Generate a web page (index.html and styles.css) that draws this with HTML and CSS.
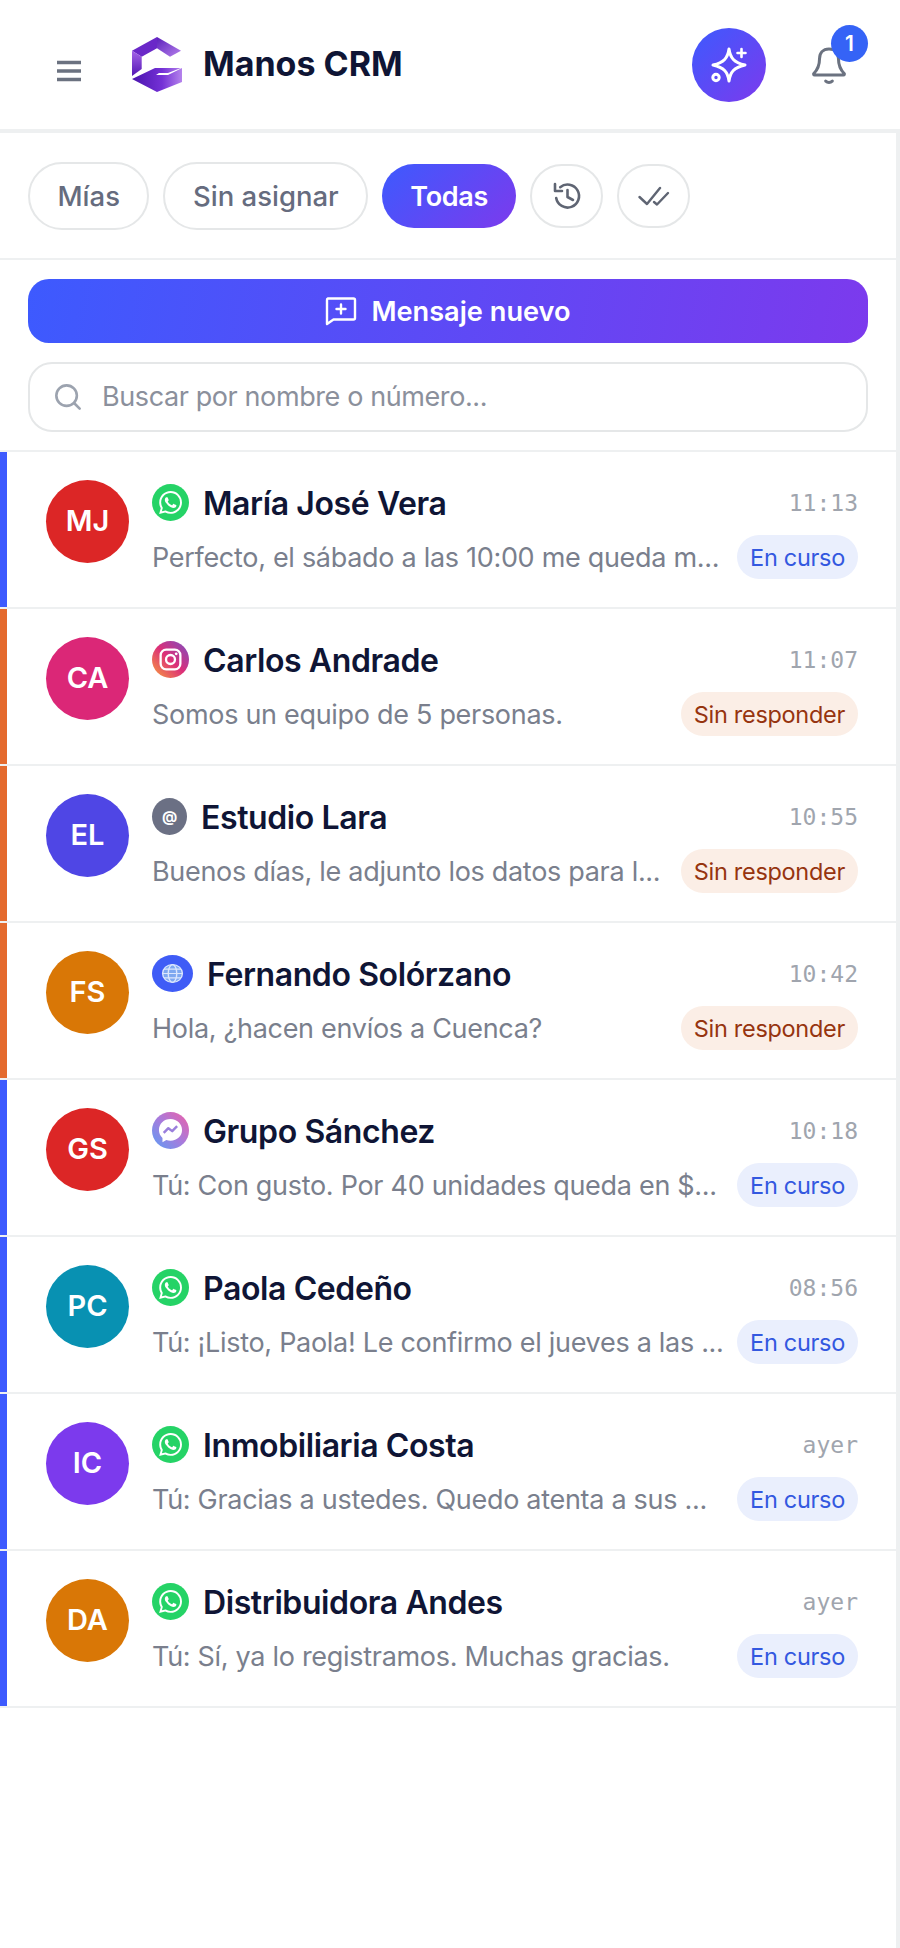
FILE: index.html
```html
<!DOCTYPE html>
<html lang="es">
<head>
    <meta charset="UTF-8">
    <meta name="viewport" content="width=device-width, initial-scale=1.0">
    <title>Manos CRM</title>
    <link rel="stylesheet" href="styles.css">
</head>
<body>
    <svg class="defs" width="0" height="0">
        <defs>
            <linearGradient id="logo-top" x1="0" y1="0" x2="1" y2="1">
                <stop offset="0" stop-color="#5a1fbb"/>
                <stop offset="1" stop-color="#b681ec"/>
            </linearGradient>
            <linearGradient id="logo-left" x1="0" y1="0" x2="0" y2="1">
                <stop offset="0" stop-color="#a564e8"/>
                <stop offset="1" stop-color="#5317b4"/>
            </linearGradient>
            <linearGradient id="logo-hand" x1="0" y1="0" x2="1" y2="0">
                <stop offset="0" stop-color="#4a14ad"/>
                <stop offset="0.6" stop-color="#7431d6"/>
                <stop offset="1" stop-color="#b583ec"/>
            </linearGradient>
            <linearGradient id="ig-grad" x1="0" y1="1" x2="1" y2="0">
                <stop offset="0" stop-color="#f9a03c"/>
                <stop offset="0.5" stop-color="#dc2f78"/>
                <stop offset="1" stop-color="#7b4fc4"/>
            </linearGradient>
            <linearGradient id="ms-grad" x1="0" y1="1" x2="1" y2="0">
                <stop offset="0" stop-color="#5b9df5"/>
                <stop offset="0.5" stop-color="#a77bdc"/>
                <stop offset="1" stop-color="#ee5fa7"/>
            </linearGradient>
            <symbol id="wa" viewBox="0 0 24 24">
                <circle cx="12" cy="12" r="12" fill="#25d366"/>
                <g transform="translate(4.6 4.6) scale(0.62)">
                    <path fill="#fff" d="M17.472 14.382c-.297-.149-1.758-.867-2.03-.967-.273-.099-.471-.148-.67.15-.197.297-.767.966-.94 1.164-.173.199-.347.223-.644.075-.297-.15-1.255-.463-2.39-1.475-.883-.788-1.48-1.761-1.653-2.059-.173-.297-.018-.458.13-.606.134-.133.298-.347.446-.52.149-.174.198-.298.298-.497.099-.198.05-.371-.025-.52-.075-.149-.669-1.612-.916-2.207-.242-.579-.487-.5-.669-.51-.173-.008-.371-.01-.57-.01-.198 0-.52.074-.792.372-.272.297-1.04 1.016-1.04 2.479 0 1.462 1.065 2.875 1.213 3.074.149.198 2.096 3.2 5.077 4.487.709.306 1.262.489 1.694.625.712.227 1.36.195 1.871.118.571-.085 1.758-.719 2.006-1.413.248-.694.248-1.289.173-1.413-.074-.124-.272-.198-.57-.347m-5.421 7.403h-.004a9.87 9.87 0 01-5.031-1.378l-.361-.214-3.741.982.998-3.648-.235-.374a9.86 9.86 0 01-1.51-5.26c.001-5.45 4.436-9.884 9.888-9.884 2.64 0 5.122 1.03 6.988 2.898a9.825 9.825 0 012.893 6.994c-.003 5.45-4.437 9.884-9.885 9.884m8.413-18.297A11.815 11.815 0 0012.05 0C5.495 0 .16 5.335.157 11.892c0 2.096.547 4.142 1.588 5.945L.057 24l6.305-1.654a11.882 11.882 0 005.683 1.448h.005c6.554 0 11.89-5.335 11.893-11.893a11.821 11.821 0 00-3.48-8.413z"/>
                </g>
            </symbol>
            <symbol id="ig" viewBox="0 0 24 24">
                <circle cx="12" cy="12" r="12" fill="url(#ig-grad)"/>
                <rect x="5.6" y="5.6" width="12.8" height="12.8" rx="3.6" fill="none" stroke="#fff" stroke-width="1.5"/>
                <circle cx="12" cy="12" r="2.9" fill="none" stroke="#fff" stroke-width="1.5"/>
                <circle cx="15.7" cy="8.3" r="0.9" fill="#fff"/>
            </symbol>
            <symbol id="ms" viewBox="0 0 24 24">
                <circle cx="12" cy="12" r="12" fill="url(#ms-grad)"/>
                <path fill="#fff" d="M12 4.6c-4.3 0-7.5 3.1-7.5 7.1 0 2.1.9 3.9 2.3 5.2v2.7l2.5-1.4c.8.2 1.7.4 2.7.4 4.3 0 7.5-3.1 7.5-6.9s-3.2-7.1-7.500-7.100z"/>
                <path fill="none" stroke="#9a7fdc" stroke-width="1.600" stroke-linejoin="round" d="M7.600 13.600l3-3.100 2.500 1.900 3.200-3.200"/>
            </symbol>
            <symbol id="web" viewBox="0 0 24 24" preserveAspectRatio="none">
                <circle cx="12" cy="12" r="12" fill="#3f5cf6"/>
                <circle cx="12" cy="12" r="5.800" fill="#7ea8f0"/>
                <g fill="none" stroke="#dbe6fd" stroke-width="0.800">
                    <circle cx="12" cy="12" r="5.800"/>
                    <ellipse cx="12" cy="12" rx="2.500" ry="5.800"/>
                    <path d="M6.200 12h11.600M7 9.200h10M7 14.800h10"/>
                </g>
            </symbol>
        </defs>
    </svg>

    <header class="topbar">
        <button class="menu-btn" aria-label="Menú">
            <svg width="26" height="22" viewBox="0 0 26 22"><path d="M1 2.500h24M1 11h24M1 19.500h24" stroke="#6b7280" stroke-width="3.400" fill="none"/></svg>
        </button>
        <svg class="logo" width="54" height="60" viewBox="0 0 54 60">
            <path fill="#6a28c8" d="M2 15.700 27 2v11.300L11.700 21.700z"/>
            <path fill="url(#logo-top)" d="M27 2l24 13.700-11 6-13-8.400z"/>
            <path fill="url(#logo-left)" d="M2 15.700l9.700 6V34L2 41z"/>
            <path fill="url(#logo-hand)" d="M2 44l23-11h26L38 38H29l-3 2h12l14-7v14L27 57z"/>
        </svg>
        <span class="brand">Manos CRM</span>
        <button class="ai-btn" aria-label="Asistente">
            <svg width="42" height="42" viewBox="0 0 42 42" fill="none" stroke="#fff" stroke-width="3" stroke-linejoin="round" stroke-linecap="round">
                <path d="M21 5c1.300 9 5 13.500 16 16-11 2.500-14.700 7-16 16-1.300-9-5-13.500-16-16 11-2.500 14.700-7 16-16z"/>
                <path d="M33.500 5v8M29.500 9h8" stroke-width="2.600"/>
                <circle cx="8" cy="33.500" r="3.200"/>
            </svg>
        </button>
        <div class="bell">
            <svg width="36" height="40" viewBox="0 0 38 42" fill="none" stroke="#6b7280" stroke-width="3.200" stroke-linecap="round" stroke-linejoin="round">
                <path d="M19 4c-6.500 0-10 4.500-10 10.500 0 7-1.500 11-6 15.500-.6.800-.2 1.500.8 1.500h30.400c1 0 1.400-.7.800-1.500-4.500-4.500-6-8.500-6-15.500C29 8.500 25.500 4 19 4z"/>
                <path d="M15.500 38c2 1.800 5 1.800 7 0"/>
            </svg>
            <span class="badge">1</span>
        </div>
    </header>

    <main class="panel">
        <div class="tabs">
            <button class="chip">Mías</button>
            <button class="chip">Sin asignar</button>
            <button class="chip chip-active">Todas</button>
            <button class="chip chip-round" aria-label="Historial">
                <svg width="30" height="30" viewBox="0 0 30 30" fill="none" stroke="#5f6573" stroke-width="2.600" stroke-linecap="round" stroke-linejoin="round">
                    <path d="M8.200 6.200A11.500 11.500 0 1 1 4.200 17"/>
                    <path d="M3 3v7h7"/>
                    <path d="M15.500 9v7l5.500 3"/>
                </svg>
            </button>
            <button class="chip chip-round" aria-label="Resueltas">
                <svg width="32" height="24" viewBox="0 0 32 24" fill="none" stroke="#5f6573" stroke-width="2.400" stroke-linecap="round" stroke-linejoin="round">
                    <path d="M1.500 13l7.500 7L22 4"/>
                    <path d="M16 18l3 2.500L30 9"/>
                </svg>
            </button>
        </div>

        <div class="actions">
            <button class="new-msg">
                <svg width="32" height="30" viewBox="0 0 32 30" fill="none" stroke="#fff" stroke-width="2.400" stroke-linejoin="round" stroke-linecap="round">
                    <path d="M3 2.500h25.500a1.500 1.500 0 0 1 1.500 1.500v18a1.500 1.500 0 0 1-1.500 1.500H8.500L2 28V4a1.500 1.500 0 0 1 1-1.500z"/>
                    <path d="M16 8.500v9M11.500 13h9"/>
                </svg>
                Mensaje nuevo
            </button>
            <label class="search">
                <svg width="28" height="28" viewBox="0 0 30 30" fill="none" stroke="#9ca3af" stroke-width="2.800" stroke-linecap="round">
                    <circle cx="13.500" cy="13.500" r="11"/>
                    <path d="M22 22l5.500 5.500"/>
                </svg>
                <input type="text" placeholder="Buscar por nombre o número...">
            </label>
        </div>

        <ul class="convos">
            <li class="convo open">
                <div class="avatar red">MJ</div>
                <div class="convo-body">
                    <div class="line">
                        <svg class="ch"><use href="#wa"/></svg>
                        <span class="name">María José Vera</span>
                        <time>11:13</time>
                    </div>
                    <div class="line">
                        <span class="preview">Perfecto, el sábado a las 10:00 me queda m...</span>
                        <span class="status going">En curso</span>
                    </div>
                </div>
            </li>
            <li class="convo waiting">
                <div class="avatar pink">CA</div>
                <div class="convo-body">
                    <div class="line">
                        <svg class="ch"><use href="#ig"/></svg>
                        <span class="name">Carlos Andrade</span>
                        <time>11:07</time>
                    </div>
                    <div class="line">
                        <span class="preview">Somos un equipo de 5 personas.</span>
                        <span class="status pending">Sin responder</span>
                    </div>
                </div>
            </li>
            <li class="convo waiting">
                <div class="avatar indigo">EL</div>
                <div class="convo-body">
                    <div class="line">
                        <span class="ch ch-mail">@</span>
                        <span class="name">Estudio Lara</span>
                        <time>10:55</time>
                    </div>
                    <div class="line">
                        <span class="preview">Buenos días, le adjunto los datos para l...</span>
                        <span class="status pending">Sin responder</span>
                    </div>
                </div>
            </li>
            <li class="convo waiting">
                <div class="avatar amber">FS</div>
                <div class="convo-body">
                    <div class="line">
                        <svg class="ch ch-web"><use href="#web"/></svg>
                        <span class="name">Fernando Solórzano</span>
                        <time>10:42</time>
                    </div>
                    <div class="line">
                        <span class="preview">Hola, ¿hacen envíos a Cuenca?</span>
                        <span class="status pending">Sin responder</span>
                    </div>
                </div>
            </li>
            <li class="convo open">
                <div class="avatar red">GS</div>
                <div class="convo-body">
                    <div class="line">
                        <svg class="ch"><use href="#ms"/></svg>
                        <span class="name">Grupo Sánchez</span>
                        <time>10:18</time>
                    </div>
                    <div class="line">
                        <span class="preview">Tú: Con gusto. Por 40 unidades queda en $...</span>
                        <span class="status going">En curso</span>
                    </div>
                </div>
            </li>
            <li class="convo open">
                <div class="avatar teal">PC</div>
                <div class="convo-body">
                    <div class="line">
                        <svg class="ch"><use href="#wa"/></svg>
                        <span class="name">Paola Cedeño</span>
                        <time>08:56</time>
                    </div>
                    <div class="line">
                        <span class="preview">Tú: ¡Listo, Paola! Le confirmo el jueves a las ...</span>
                        <span class="status going">En curso</span>
                    </div>
                </div>
            </li>
            <li class="convo open">
                <div class="avatar violet">IC</div>
                <div class="convo-body">
                    <div class="line">
                        <svg class="ch"><use href="#wa"/></svg>
                        <span class="name">Inmobiliaria Costa</span>
                        <time>ayer</time>
                    </div>
                    <div class="line">
                        <span class="preview">Tú: Gracias a ustedes. Quedo atenta a sus ...</span>
                        <span class="status going">En curso</span>
                    </div>
                </div>
            </li>
            <li class="convo open">
                <div class="avatar amber">DA</div>
                <div class="convo-body">
                    <div class="line">
                        <svg class="ch"><use href="#wa"/></svg>
                        <span class="name">Distribuidora Andes</span>
                        <time>ayer</time>
                    </div>
                    <div class="line">
                        <span class="preview">Tú: Sí, ya lo registramos. Muchas gracias.</span>
                        <span class="status going">En curso</span>
                    </div>
                </div>
            </li>
        </ul>
    </main>
</body>
</html>
```

FILE: styles.css
```css
* {
    box-sizing: border-box;
}

body {
    margin: 0;
    height: 1948px;
    overflow: hidden;
    background-color: #fff;
    font-family: Inter, "Noto Sans", sans-serif;
    color: #0f1535;
    display: flex;
    flex-direction: column;
}

button {
    font-family: inherit;
    cursor: pointer;
}

.defs {
    position: absolute;
}

/* top bar */
.topbar {
    height: 133px;
    flex-shrink: 0;
    display: flex;
    align-items: center;
    padding: 0 53px 0 56px;
    border-bottom: 4px solid #eef0f1;
}

.menu-btn {
    border: none;
    background: none;
    padding: 0;
    width: 26px;
    height: 22px;
    margin-top: 12px;
}

.logo {
    margin-left: 48px;
}

.brand {
    margin-left: 19px;
    font-size: 34px;
    font-weight: 700;
    margin-top: -2px;
}

.ai-btn {
    margin-left: auto;
    width: 74px;
    height: 74px;
    border: none;
    border-radius: 50%;
    padding: 0;
    background: linear-gradient(135deg, #3d5afe, #7c3aed);
    display: flex;
    align-items: center;
    justify-content: center;
}

.bell {
    position: relative;
    margin-left: 45px;
    width: 36px;
    height: 40px;
}

.badge {
    position: absolute;
    top: -20px;
    left: 20px;
    width: 37px;
    height: 37px;
    border-radius: 50%;
    background-color: #3563f6;
    color: #fff;
    font-size: 21px;
    font-weight: 600;
    display: flex;
    align-items: center;
    justify-content: center;
}

/* main column */
.panel {
    flex: 1;
    margin-right: 4px;
    box-shadow: 4px 0 0 #eef0f1;
}

.tabs {
    height: 127px;
    display: flex;
    align-items: center;
    gap: 14px;
    padding: 1px 28px 0;
    border-bottom: 2px solid #eef0f1;
}

.chip {
    height: 68px;
    padding: 0 27.5px;
    border: 2.5px solid #e5e7e8;
    border-radius: 34px;
    background-color: #fff;
    color: #666c7e;
    font-size: 27.5px;
    font-weight: 500;
}

.chip-active {
    height: 64px;
    padding: 0 28px;
    border: none;
    background: linear-gradient(135deg, #3d5afe, #7c3aed);
    color: #fff;
    font-size: 27px;
    font-weight: 600;
    letter-spacing: -0.3px;
}

.chip-round {
    width: 73px;
    height: 64px;
    padding: 0;
    display: flex;
    align-items: center;
    justify-content: center;
}

.actions {
    display: flex;
    flex-direction: column;
    gap: 19px;
    padding: 19px 28px;
    height: 192px;
    border-bottom: 2px solid #eef0f1;
}

.new-msg {
    height: 64px;
    flex-shrink: 0;
    border: none;
    border-radius: 21px;
    background: linear-gradient(100deg, #3d5afe, #7c3aed);
    color: #fff;
    font-size: 27.2px;
    font-weight: 600;
    display: flex;
    align-items: center;
    justify-content: center;
    gap: 14px;
}

.search {
    height: 70px;
    flex-shrink: 0;
    display: flex;
    align-items: center;
    gap: 20px;
    padding: 0 24px;
    border: 2.5px solid #e5e7e8;
    border-radius: 24px;
}

.search input {
    flex: 1;
    border: none;
    outline: none;
    background: none;
    padding: 0 0 2px;
    font-family: inherit;
    font-size: 27px;
    letter-spacing: -0.4px;
}

.search input::placeholder {
    color: #8b909c;
    opacity: 1;
}

/* conversation list */
.convos {
    list-style: none;
    margin: 0;
    padding: 0;
}

.convo {
    height: 157px;
    display: flex;
    align-items: flex-start;
    gap: 23px;
    padding: 28px 38px 0 46px;
    border-bottom: 2px solid #eef0f1;
}

.convo.open {
    box-shadow: inset 7px 0 0 #3d5afe;
}

.convo.waiting {
    box-shadow: inset 7px 0 0 #e46a2e;
}

.avatar {
    width: 83px;
    height: 83px;
    flex-shrink: 0;
    padding-bottom: 2px;
    border-radius: 50%;
    color: #fff;
    font-size: 29px;
    font-weight: 600;
    display: flex;
    align-items: center;
    justify-content: center;
}

.red { background-color: #dc2626; }
.pink { background-color: #db2777; }
.indigo { background-color: #4f46e5; }
.amber { background-color: #d97706; }
.teal { background-color: #0891b2; }
.violet { background-color: #7c3aed; }

.convo-body {
    flex: 1;
    min-width: 0;
    display: flex;
    flex-direction: column;
    gap: 11px;
}

.line {
    display: flex;
    align-items: center;
    min-height: 44px;
}

.ch {
    width: 37px;
    height: 37px;
    flex-shrink: 0;
    margin-right: 14px;
}

.ch-web {
    width: 41px;
}

.ch-mail {
    width: 35px;
    border-radius: 50%;
    background-color: #6b7084;
    color: #fff;
    font-size: 15px;
    font-weight: 700;
    display: flex;
    align-items: center;
    justify-content: center;
}

.name {
    padding-top: 2px;
    font-size: 32px;
    font-weight: 600;
    letter-spacing: -0.4px;
    white-space: nowrap;
}

time {
    margin-left: auto;
    padding-top: 2px;
    font-family: "DejaVu Sans Mono", monospace;
    font-size: 23px;
    color: #a0a5ae;
}

.preview {
    flex: 1;
    min-width: 0;
    font-size: 27px;
    letter-spacing: -0.3px;
    color: #7a7f8d;
    white-space: nowrap;
}

.status {
    flex-shrink: 0;
    height: 44px;
    margin-left: 16px;
    padding: 0 13px;
    border-radius: 22px;
    font-size: 23.5px;
    letter-spacing: -0.3px;
    display: flex;
    align-items: center;
}

.going {
    background-color: #eaeffd;
    color: #3358e0;
}

.pending {
    background-color: #fbeee6;
    color: #96340f;
}
```
